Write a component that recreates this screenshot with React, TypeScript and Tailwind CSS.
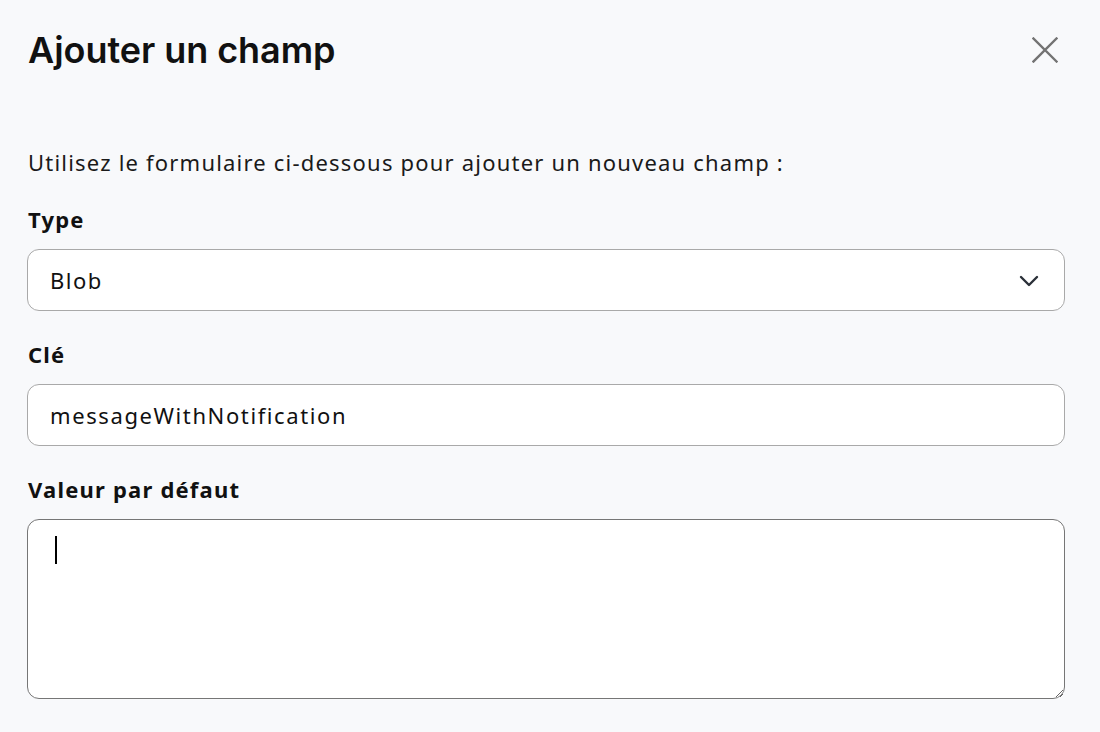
import React from "react";

export default function App() {
  return (
    <div className="min-h-[732px] w-full bg-[#f8f9fb] text-[#111] pl-[28px] pr-[35px]" style={{ fontFamily: '"Noto Sans", "Lato", sans-serif' }}>
      <div className="flex items-center justify-between pt-[30px]">
        <h1 className="text-[36px] leading-[40px] font-semibold tracking-[-0.05px]" style={{ fontFamily: '"Inter", "Lato", sans-serif' }}>
          Ajouter un champ
        </h1>
        <button className="flex h-[40px] w-[40px] items-center justify-center" aria-label="Fermer">
          <svg width="26" height="26" viewBox="0 0 26 26" fill="none" stroke="#737373" strokeWidth="2.4" strokeLinecap="square">
            <path d="M1.5 1.5L24.5 24.5M24.5 1.5L1.5 24.5" />
          </svg>
        </button>
      </div>

      <p className="mt-[77px] text-[22px] leading-[30px] tracking-[1.2px] text-[#1a1a1a]">
        Utilisez le formulaire ci-dessous pour ajouter un nouveau champ :
      </p>

      <div className="mt-[27px] flex flex-col">
        <label className="text-[22px] leading-[30px] font-bold tracking-[1.2px]">Type</label>
        <div className="relative mt-[15px] ml-[-1px]">
          <select className="h-[62px] w-full appearance-none rounded-[12px] border border-[#a9a9a9] bg-white pl-[22px] pr-[50px] text-[22px] tracking-[1.5px] text-[#111] outline-none" defaultValue="Blob">
            <option>Blob</option>
          </select>
          <svg className="pointer-events-none absolute right-[26px] top-[26px]" width="20" height="12" viewBox="0 0 20 12" fill="none" stroke="#2b3038" strokeWidth="2.4" strokeLinecap="round" strokeLinejoin="round">
            <path d="M2 2l8 8 8-8" />
          </svg>
        </div>
      </div>

      <div className="mt-[28px] flex flex-col">
        <label className="text-[22px] leading-[30px] font-bold tracking-[1.2px]">Clé</label>
        <input
          className="mt-[15px] ml-[-1px] h-[62px] w-[calc(100%+1px)] rounded-[12px] border border-[#a9a9a9] bg-white px-[22px] text-[22px] tracking-[1.6px] text-[#111] outline-none"
          defaultValue="messageWithNotification"
        />
      </div>

      <div className="mt-[28px] flex flex-col">
        <label className="text-[22px] leading-[30px] font-bold tracking-[1.2px]">Valeur par défaut</label>
        <div className="relative mt-[15px] ml-[-1px]">
          <textarea className="block h-[180px] w-full rounded-[12px] border border-[#767676] bg-white px-[22px] py-[14px] text-[22px] outline-none" />
          <span className="pointer-events-none absolute left-[28px] top-[17px] h-[28px] w-[2px] bg-black" />
        </div>
      </div>
    </div>
  );
}
